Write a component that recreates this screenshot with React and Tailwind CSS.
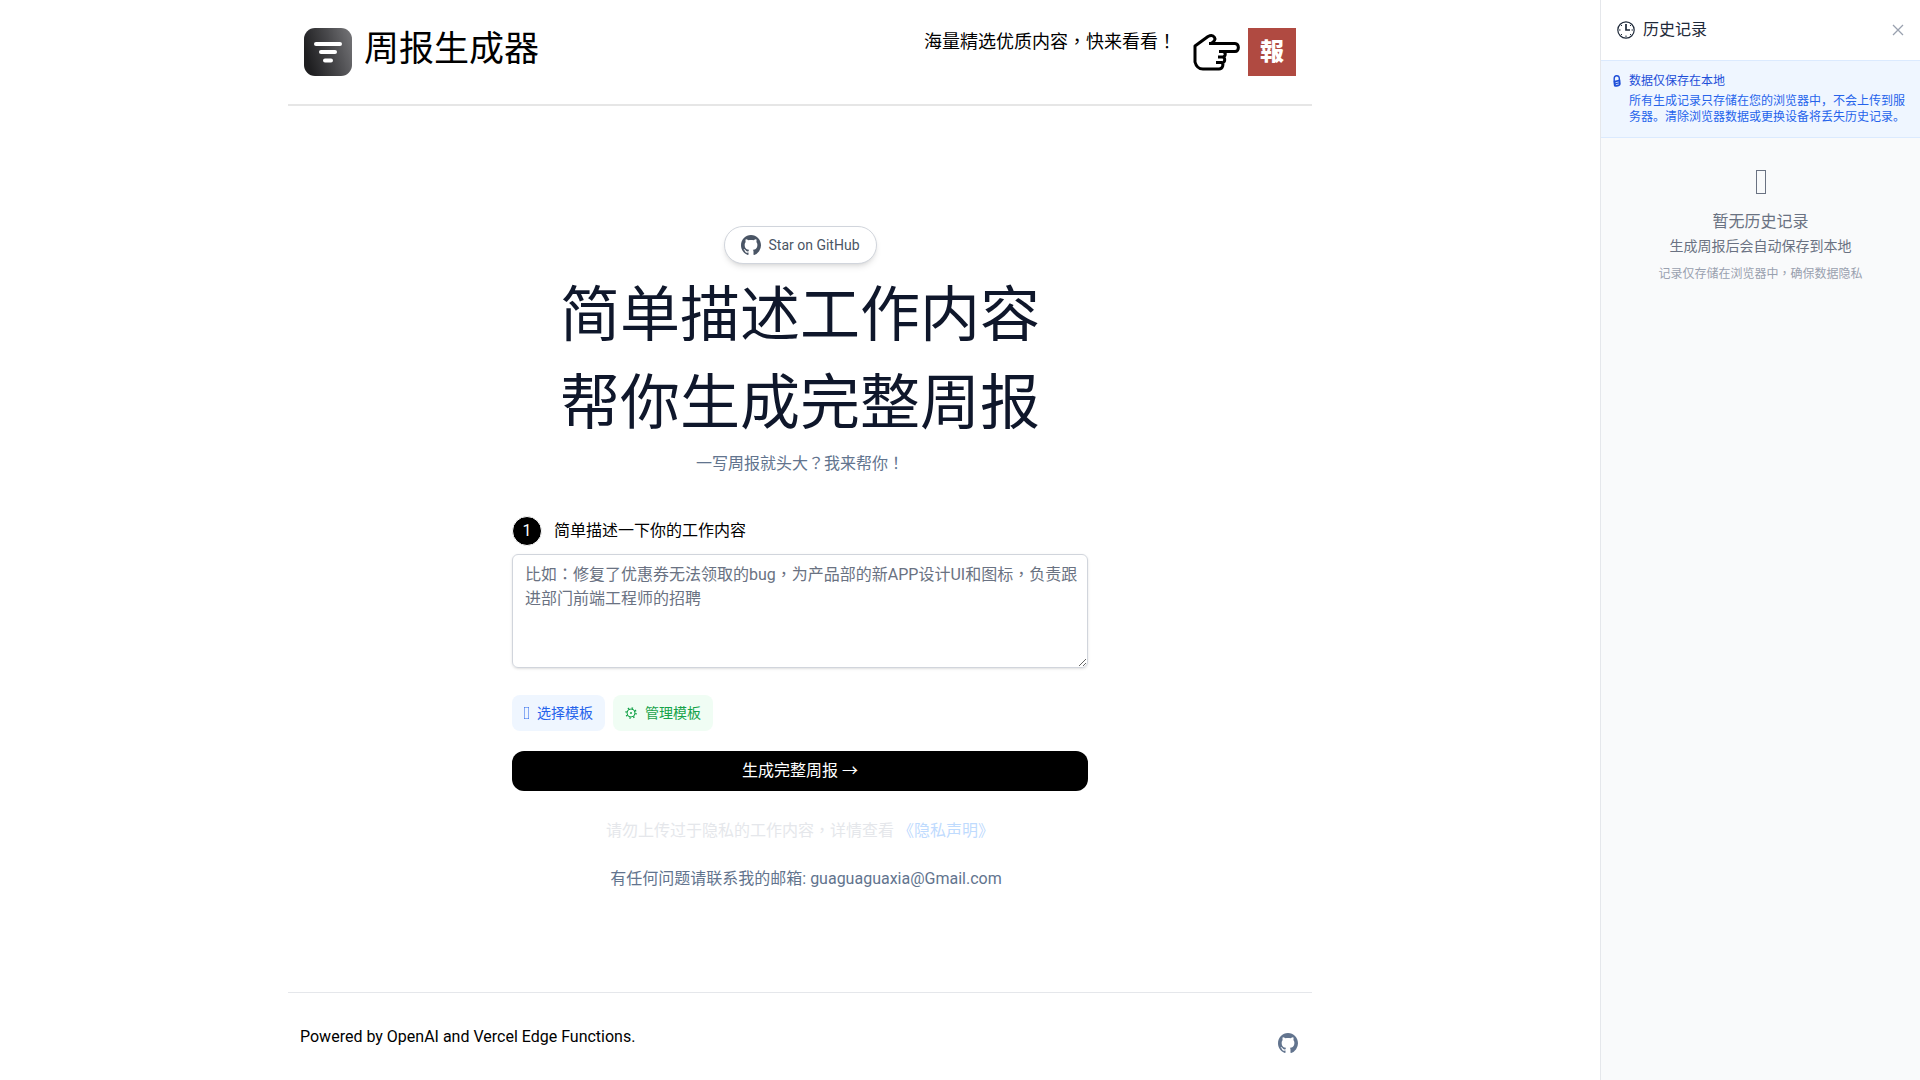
import React, {useState} from 'react';

const GitHubIcon = ({className}) => (
    <svg viewBox="0 0 24 24" fill="currentColor" aria-hidden="true" className={className}>
        <path d="M12 0C5.37 0 0 5.506 0 12.303c0 5.445 3.435 10.043 8.205 11.674.6.107.825-.262.825-.585 0-.292-.015-1.261-.015-2.291C6 21.67 5.22 20.346 4.98 19.654c-.135-.354-.72-1.446-1.23-1.738-.42-.23-1.02-.8-.015-.815.945-.015 1.62.892 1.845 1.261 1.08 1.86 2.805 1.338 3.495 1.015.105-.8.42-1.338.765-1.645-2.67-.308-5.46-1.37-5.46-6.075 0-1.338.465-2.446 1.23-3.307-.12-.308-.54-1.569.12-3.26 0 0 1.005-.323 3.3 1.26.96-.276 1.98-.415 3-.415s2.04.139 3 .416c2.295-1.6 3.3-1.261 3.3-1.261.66 1.691.24 2.952.12 3.26.765.861 1.23 1.953 1.23 3.307 0 4.721-2.805 5.767-5.475 6.075.435.384.81 1.122.81 2.276 0 1.645-.015 2.968-.015 3.383 0 .323.225.707.825.585a12.047 12.047 0 0 0 5.919-4.489A12.537 12.537 0 0 0 24 12.304C24 5.505 18.63 0 12 0Z"/>
    </svg>
);

const LogoIcon = () => (
    <svg viewBox="0 0 48 48" aria-hidden="true" className="size-12">
        <defs>
            <linearGradient id="logo" x1="0" y1="0.4" x2="1" y2="0.1">
                <stop offset="0" stopColor="#1f1f21"/>
                <stop offset="0.5" stopColor="#47474a"/>
                <stop offset="1" stopColor="#747477"/>
            </linearGradient>
        </defs>
        <rect width="48" height="48" rx="11" fill="url(#logo)"/>
        <g stroke="#fff" strokeWidth="4" strokeLinecap="round">
            <path d="M12 16h24"/>
            <path d="M17 24h14"/>
            <path d="M21 32.500h6"/>
        </g>
    </svg>
);

const HandIcon = () => (
    <svg viewBox="0 0 48 48" fill="none" stroke="#000" strokeWidth="3" strokeLinejoin="round" aria-hidden="true" className="size-12">
        <path d="M17 15.500h26c4.500 0 4.500 8 0 8H27M19 15.500c3-2 5-4 3.500-6-1.500-2.500-4.500-2-6.500-1L3 18v16c1 4 4 7 8 7h16c4 0 5-5.500 2.500-6.500H24M31 23.500c3.500 1 2.500 5 0 5.500h-5M31 29c2.500 1 2 5 0 5.500"/>
    </svg>
);

const ClockIcon = () => (
    <svg viewBox="0 0 18 18" fill="none" stroke="currentColor" aria-hidden="true" className="size-[18px]">
        <circle cx="9" cy="9" r="8.200" strokeWidth="1.200"/>
        <path d="M9 3v6h4" strokeWidth="1.700"/>
        <path d="M9 14.500v1.500M2 9h1.500M14.500 9H16M4 4l1 1M14 4l-1 1M4 14l1-1M14 14l-1-1" strokeWidth="1"/>
    </svg>
);

const LockIcon = () => (
    <svg viewBox="0 0 8 12" fill="none" stroke="currentColor" aria-hidden="true" className="h-3 w-2">
        <path d="M1.200 6V3.500C1.200-.200 6 0 6.300 3v2.500" strokeWidth="1.400"/>
        <path d="M.300 6 7.300 4.500l.400 4.500C7.200 11.500 4 12.500 1 11.300Z" fill="currentColor" stroke="none"/>
        <path d="M2.500 7.700 5.700 7M2.800 9.700l3-.700" stroke="#eff6ff" strokeWidth="0.800"/>
    </svg>
);

const GearIcon = () => (
    <svg viewBox="0 0 12 12" fill="none" stroke="currentColor" aria-hidden="true" className="size-3">
        <circle cx="6" cy="6" r="4"/>
        <circle cx="6" cy="6" r="5" strokeWidth="1.500" strokeDasharray="1.500 2.427"/>
        <circle cx="6" cy="6" r="1" fill="currentColor" stroke="none"/>
    </svg>
);

const BoxIcon = ({className}) => (
    <svg viewBox="0 0 10 24" fill="none" stroke="currentColor" aria-hidden="true" className={className}>
        <rect x="0.500" y="0.500" width="9" height="23"/>
    </svg>
);

const Header = () => (
    <header className="flex w-full justify-between border-b-2 border-[#e6e6e6] px-4 pt-7 pb-7">
        <a href="#" className="flex gap-3">
            <LogoIcon/>
            <h1 className="text-[35px] leading-11">周报生成器</h1>
        </a>
        <a href="#" className="flex gap-2 font-['Roboto','Noto_Sans_CJK_TC',sans-serif]">
            <span className="mr-2 text-lg leading-7">海量精选优质内容，快来看看！</span>
            <HandIcon/>
            <span className="flex size-12 items-center justify-center bg-[#b04a41] text-2xl font-black text-white">報</span>
        </a>
    </header>
);

const Generator = () => {
    const [content, setContent] = useState('');

    return (
        <main className="flex w-full flex-1 flex-col items-center px-4 pt-30 text-center">
            <a href="#" className="flex h-[38px] items-center gap-2 rounded-full border border-gray-300 bg-white px-4 text-sm text-gray-600 shadow-md">
                <GitHubIcon className="size-5"/>
                <span>Star on GitHub</span>
            </a>
            <h2 className="mt-2 text-6xl leading-[88px] text-slate-900">
                简单描述工作内容<br/>帮你生成完整周报
            </h2>
            <p className="mt-1 font-['Roboto','Noto_Sans_CJK_TC',sans-serif] text-slate-500">一写周报就头大？我来帮你！</p>

            <form className="mt-10 flex w-full max-w-xl flex-col" onSubmit={e => e.preventDefault()}>
                <label htmlFor="content" className="flex items-center gap-3">
                    <span className="flex size-[30px] items-center justify-center rounded-full border border-white bg-black text-white">1</span>
                    简单描述一下你的工作内容
                </label>
                <textarea
                    id="content"
                    rows={4}
                    value={content}
                    onChange={e => setContent(e.target.value)}
                    placeholder="比如：修复了优惠券无法领取的bug，为产品部的新APP设计UI和图标，负责跟进部门前端工程师的招聘"
                    className="mt-2 block w-full rounded-md border border-gray-300 py-2 pr-2 pl-3 font-['Roboto','Noto_Sans_CJK_TC',sans-serif] leading-6 shadow-sm placeholder:text-gray-500"
                />
                <div className="mt-[27px] flex gap-2 text-sm">
                    <button type="button" className="flex h-9 items-center gap-2 rounded-lg bg-[#eff6ff] px-3 text-[#2563eb]">
                        <BoxIcon className="h-3 w-[5px]"/>
                        选择模板
                    </button>
                    <button type="button" className="flex h-9 items-center gap-2 rounded-lg bg-[#f0fdf4] px-3 text-[#16a34a]">
                        <GearIcon/>
                        管理模板
                    </button>
                </div>
                <button type="submit" className="mt-5 h-10 rounded-xl bg-black text-white">生成完整周报 →</button>
            </form>

            <p className="mt-7 font-['Roboto','Noto_Sans_CJK_TC',sans-serif] text-gray-200">
                请勿上传过于隐私的工作内容，详情查看 <a href="#" className="text-[#bfdbfe]">《隐私声明》</a>
            </p>
            <p className="mt-6 pl-3 text-slate-500">有任何问题请联系我的邮箱: guaguaguaxia@Gmail.com</p>
        </main>
    );
};

const Footer = () => (
    <footer className="flex w-full justify-between border-t border-gray-200 px-3 pt-8 pb-[27px]">
        <p>Powered by OpenAI and Vercel Edge Functions.</p>
        <a href="#" aria-label="GitHub" className="mt-2 mr-0.5 text-slate-500">
            <GitHubIcon className="size-5"/>
        </a>
    </footer>
);

const HistoryPanel = () => (
    <aside className="w-80 shrink-0 border-l border-gray-200 bg-gray-50">
        <div className="flex h-[60px] items-center justify-between bg-white px-4 text-gray-800">
            <h3 className="flex items-center gap-2">
                <ClockIcon/>
                历史记录
            </h3>
            <button type="button" aria-label="关闭" className="text-gray-400">
                <svg viewBox="0 0 12 12" stroke="currentColor" strokeWidth="1.300" className="size-3">
                    <path d="M1 1l10 10M11 1L1 11"/>
                </svg>
            </button>
        </div>
        <div className="flex gap-2 border-y border-[#dbeafe] bg-[#eff6ff] p-3 text-xs">
            <div className="pt-0.5 text-[#1d4ed8]">
                <LockIcon/>
            </div>
            <div>
                <p className="text-[#1d4ed8]">数据仅保存在本地</p>
                <p className="mt-1 text-[#2563eb]">所有生成记录只存储在您的浏览器中，不会上传到服务器。清除浏览器数据或更换设备将丢失历史记录。</p>
            </div>
        </div>
        <div className="flex flex-col items-center pt-8 text-gray-500">
            <BoxIcon className="h-6 w-[10px]"/>
            <p className="mt-4">暂无历史记录</p>
            <p className="mt-0.5 text-sm">生成周报后会自动保存到本地</p>
            <p className="mt-2.5 font-['Roboto','Noto_Sans_CJK_TC',sans-serif] text-xs text-gray-400">记录仅存储在浏览器中，确保数据隐私</p>
        </div>
    </aside>
);

export default function App() {
    return (
        <div className="flex min-h-screen bg-white font-['Roboto','Noto_Sans_CJK_SC',sans-serif] text-black">
            <div className="flex flex-1 justify-center">
                <div className="flex w-full max-w-5xl flex-col">
                    <Header/>
                    <Generator/>
                    <Footer/>
                </div>
            </div>
            <HistoryPanel/>
        </div>
    );
}
